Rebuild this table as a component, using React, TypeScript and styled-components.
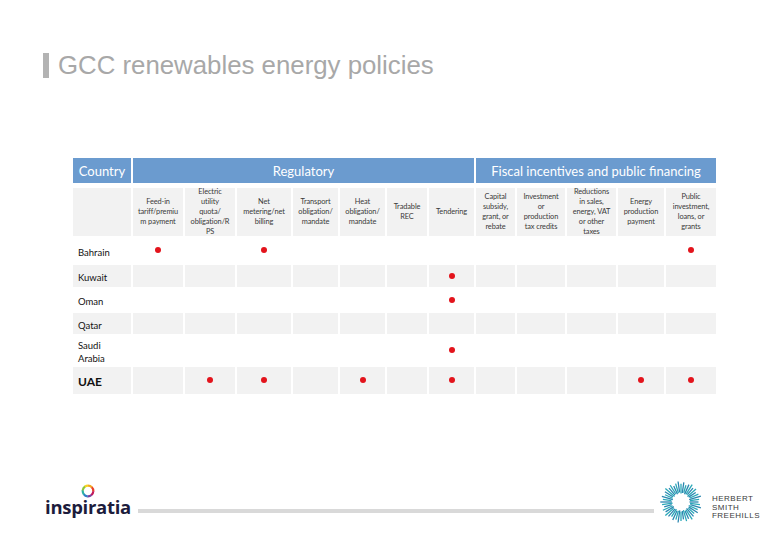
import React from "react";
import styled, { createGlobalStyle } from "styled-components";

const GlobalStyle = createGlobalStyle`
  html, body {
    margin: 0;
    padding: 0;
    background: #ffffff;
  }
`;

type Column = { lines: string[] };

const columns: Column[] = [
  { lines: ["Feed-in", "tariff/premiu", "m payment"] },
  { lines: ["Electric", "utility", "quota/", "obligation/R", "PS"] },
  { lines: ["Net", "metering/net", "billing"] },
  { lines: ["Transport", "obligation/", "mandate"] },
  { lines: ["Heat", "obligation/", "mandate"] },
  { lines: ["Tradable", "REC"] },
  { lines: ["Tendering"] },
  { lines: ["Capital", "subsidy,", "grant, or", "rebate"] },
  { lines: ["Investment", "or", "production", "tax credits"] },
  { lines: ["Reductions", "in sales,", "energy, VAT", "or other", "taxes"] },
  { lines: ["Energy", "production", "payment"] },
  { lines: ["Public", "investment,", "loans, or", "grants"] },
];

type Country = {
  name: string[];
  height: number;
  shaded: boolean;
  big?: boolean;
  marks: number[];
};

const countries: Country[] = [
  { name: ["Bahrain"], height: 25, shaded: false, marks: [0, 2, 11] },
  { name: ["Kuwait"], height: 22, shaded: true, marks: [6] },
  { name: ["Oman"], height: 22, shaded: false, marks: [6] },
  { name: ["Qatar"], height: 21, shaded: true, marks: [] },
  { name: ["Saudi", "Arabia"], height: 29, shaded: false, marks: [6] },
  { name: ["UAE"], height: 27, shaded: true, big: true, marks: [1, 2, 4, 6, 10, 11] },
];

const ringColors = ["#f5a623", "#e8412c", "#c2185b", "#7b3fa0", "#2f80c8", "#2bb3a3", "#8cc63f", "#f7d21e"];
const ringLen = 2 * Math.PI * 5.3;

export default function App() {
  return (
    <>
      <GlobalStyle />
      <Page>
        <TitleRow>
          <TitleBar />
          <Title>GCC renewables energy policies</Title>
        </TitleRow>

        <Table>
          <HeadCell>Country</HeadCell>
          <HeadCell $span={7}>Regulatory</HeadCell>
          <HeadCell $span={5}>Fiscal incentives and public financing</HeadCell>

          <SubCell />
          {columns.map((col, i) => (
            <SubCell key={i}>
              {col.lines.map((l, j) => (
                <span key={j}>{l}</span>
              ))}
            </SubCell>
          ))}

          {countries.map((c) => (
            <React.Fragment key={c.name.join(" ")}>
              <NameCell $shaded={c.shaded} $height={c.height} $big={c.big}>
                {c.name.map((n) => (
                  <span key={n}>{n}</span>
                ))}
              </NameCell>
              {columns.map((_, i) => (
                <DataCell key={i} $shaded={c.shaded} $height={c.height}>
                  {c.marks.includes(i) && <Dot />}
                </DataCell>
              ))}
            </React.Fragment>
          ))}
        </Table>

        <Footer>
          <InspiratiaLogo>
            <svg width="14" height="14" viewBox="0 0 14 14">
              {ringColors.map((c, i) => (
                <circle
                  key={c}
                  cx="7"
                  cy="7"
                  r="5.3"
                  fill="none"
                  stroke={c}
                  strokeWidth="2.2"
                  strokeDasharray={`${ringLen / 8 + 0.3} ${ringLen}`}
                  strokeDashoffset={-(ringLen / 8) * i}
                  transform="rotate(-90 7 7)"
                />
              ))}
            </svg>
            <InspiratiaText>inspiratia</InspiratiaText>
          </InspiratiaLogo>
          <Rule />
          <HsfLogo>
            <svg width="42" height="42" viewBox="-21 -21 42 42">
              {Array.from({ length: 44 }).map((_, i) => {
                const a = (i / 44) * Math.PI * 2;
                const inner = 8.5 + (i % 3) * 0.6;
                const outer = 17.5 + ((i * 7) % 5) * 0.8;
                return (
                  <line
                    key={i}
                    x1={Math.cos(a) * inner}
                    y1={Math.sin(a) * inner}
                    x2={Math.cos(a) * outer}
                    y2={Math.sin(a) * outer}
                    stroke={i % 2 ? "#2aa8b8" : "#2b86b0"}
                    strokeWidth="1.3"
                  />
                );
              })}
            </svg>
            <HsfText>
              <span>HERBERT</span>
              <span>SMITH</span>
              <span>FREEHILLS</span>
            </HsfText>
          </HsfLogo>
        </Footer>
      </Page>
    </>
  );
}

const Page = styled.div`
  width: 780px;
  height: 540px;
  display: flex;
  flex-direction: column;
  box-sizing: border-box;
  padding-top: 53px;
  overflow: hidden;
  background: #ffffff;
`;

const TitleRow = styled.div`
  display: flex;
  align-items: center;
  gap: 9px;
  margin-left: 43px;
  height: 25px;
`;

const TitleBar = styled.div`
  width: 6px;
  height: 25px;
  background: #b3b3b3;
`;

const Title = styled.h1`
  margin: 0;
  font-family: "Liberation Sans", Arial, sans-serif;
  font-weight: 400;
  font-size: 25.8px;
  line-height: 25px;
  color: #a8a8a8;
`;

const Table = styled.div`
  margin: 80px 0 0 73px;
  display: grid;
  grid-template-columns: 58px 50px 50px 54px 45px 45px 40px 45px 39px 48px 49px 46px 50px;
  column-gap: 2px;
  row-gap: 2px;
  font-family: Lato, "Open Sans", sans-serif;
`;

const HeadCell = styled.div<{ $span?: number }>`
  grid-column: span ${(p) => p.$span ?? 1};
  height: 25px;
  margin-bottom: 3px;
  background: #6b9bcf;
  color: #ffffff;
  font-size: 13px;
  display: flex;
  align-items: center;
  justify-content: center;
`;

const SubCell = styled.div`
  height: 48px;
  background: #f2f2f2;
  display: flex;
  flex-direction: column;
  align-items: center;
  justify-content: center;
  text-align: center;
  font-size: 7.4px;
  line-height: 10.2px;
  color: #3a3a3a;
  white-space: nowrap;
  letter-spacing: -0.1px;
`;

const NameCell = styled.div<{ $shaded: boolean; $height: number; $big?: boolean }>`
  height: ${(p) => p.$height}px;
  background: ${(p) => (p.$shaded ? "#f2f2f2" : "#ffffff")};
  display: flex;
  flex-direction: column;
  justify-content: center;
  padding: ${(p) => (p.$big ? "2px" : "3px")} 0 0 5px;
  box-sizing: border-box;
  font-size: ${(p) => (p.$big ? "12px" : "9.5px")};
  font-weight: ${(p) => (p.$big ? 700 : 400)};
  line-height: 13px;
  color: #111111;
`;

const DataCell = styled.div<{ $shaded: boolean; $height: number }>`
  height: ${(p) => p.$height}px;
  background: ${(p) => (p.$shaded ? "#f2f2f2" : "#ffffff")};
  display: flex;
  align-items: center;
  justify-content: center;
`;

const Dot = styled.span`
  width: 6px;
  height: 6px;
  border-radius: 50%;
  background: #e3141c;
  margin-top: -1px;
`;

const Footer = styled.div`
  margin-top: auto;
  margin-bottom: 17px;
  display: flex;
  align-items: center;
  padding: 0 20px 0 46px;
`;

const InspiratiaLogo = styled.div`
  display: flex;
  flex-direction: column;
  align-items: center;
  width: 84px;
  margin-top: -4px;
`;

const InspiratiaText = styled.div`
  font-family: "Open Sans", "DejaVu Sans", sans-serif;
  font-weight: 700;
  font-size: 18.5px;
  line-height: 20px;
  color: #1c1c3c;
  letter-spacing: -0.3px;
  margin-top: -1px;
`;

const Rule = styled.div`
  flex: 1;
  height: 4px;
  background: #d9d9d9;
  margin: 18px 6px 0 8px;
`;

const HsfLogo = styled.div`
  display: flex;
  align-items: center;
  gap: 10px;
`;

const HsfText = styled.div`
  display: flex;
  flex-direction: column;
  margin-top: 12px;
  font-family: "Liberation Sans", Arial, sans-serif;
  font-size: 8px;
  line-height: 8.6px;
  color: #3a3a3a;
  letter-spacing: 0.5px;
`;
